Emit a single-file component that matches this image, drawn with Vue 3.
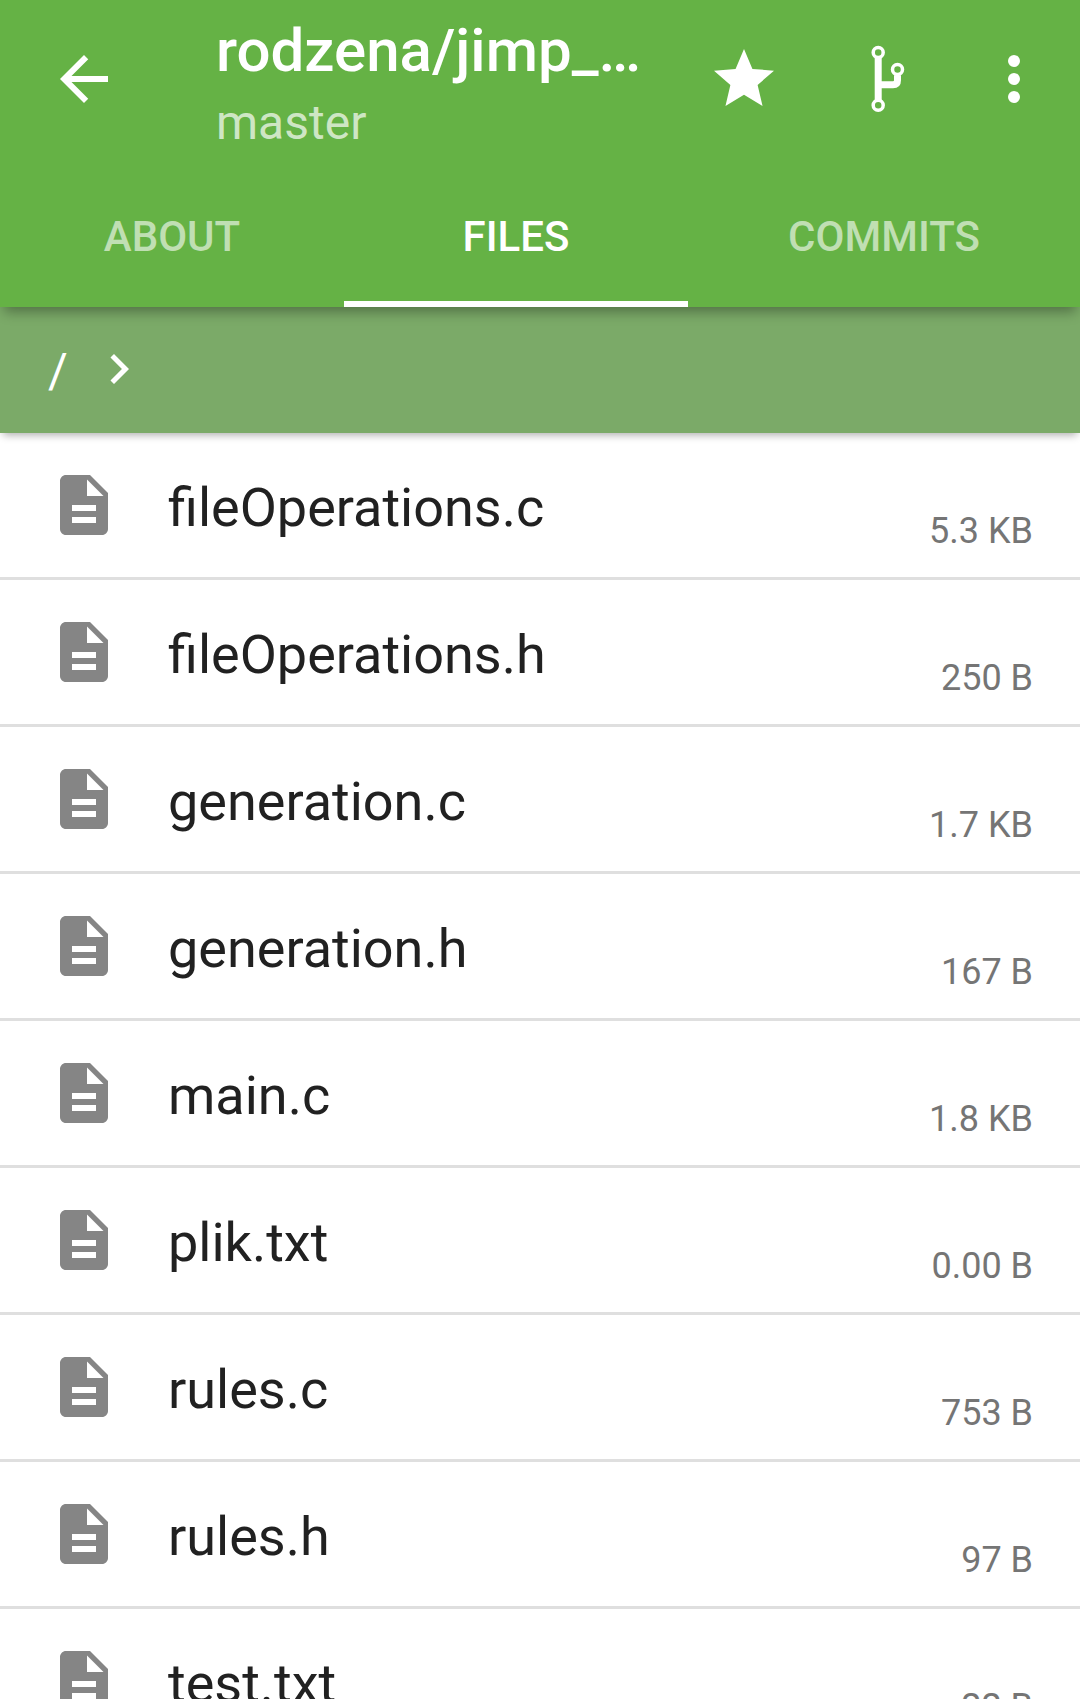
<script setup>
import { ref } from 'vue'

const tabs = ['About', 'Files', 'Commits']
const active = ref('Files')

const files = [
  { name: 'fileOperations.c', size: '5.3 KB' },
  { name: 'fileOperations.h', size: '250 B' },
  { name: 'generation.c', size: '1.7 KB' },
  { name: 'generation.h', size: '167 B' },
  { name: 'main.c', size: '1.8 KB' },
  { name: 'plik.txt', size: '0.00 B' },
  { name: 'rules.c', size: '753 B' },
  { name: 'rules.h', size: '97 B' },
  { name: 'test.txt', size: '22 B' },
]
</script>

<template>
  <div class="screen">
    <header class="app-bar">
      <div class="toolbar">
        <svg class="icon back" viewBox="0 0 24 24"><path d="M20 11H7.83l5.59-5.59L12 4l-8 8 8 8 1.41-1.41L7.83 13H20v-2z" /></svg>
        <div class="titles">
          <h1>rodzena/jimp_…</h1>
          <p>master</p>
        </div>
        <div class="actions">
          <svg class="icon" viewBox="0 0 24 24"><path d="M12 17.27L18.18 21l-1.64-7.03L22 9.24l-7.19-.61L12 2 9.19 8.63 2 9.24l5.46 4.73L5.82 21z" /></svg>
          <svg class="icon fork" viewBox="0 0 72 72">
            <path d="M26.2 15v42M26.2 41.7h14.8q4.5 0 4.5-4.5v-5" stroke-width="7" />
            <g stroke-width="3.5">
              <circle cx="26.2" cy="9.5" r="5" />
              <circle cx="26.2" cy="62.3" r="5" />
              <circle cx="45.5" cy="26.5" r="5" />
            </g>
          </svg>
          <svg class="icon" viewBox="0 0 24 24">
            <circle cx="12" cy="6" r="2" /><circle cx="12" cy="12" r="2" /><circle cx="12" cy="18" r="2" />
          </svg>
        </div>
      </div>
      <nav class="tabs">
        <button v-for="tab in tabs" :key="tab" class="tab" :class="{ active: tab === active }" @click="active = tab">
          {{ tab }}
        </button>
      </nav>
    </header>

    <div class="path-bar">
      <span>/</span>
      <svg viewBox="0 0 24 24"><path d="M10 6L8.59 7.41 13.17 12l-4.58 4.59L10 18l6-6z" /></svg>
    </div>

    <ul class="files">
      <li v-for="file in files" :key="file.name">
        <svg class="icon" viewBox="0 0 24 24"><path d="M14 2H6c-1.1 0-2 .9-2 2v16c0 1.1.9 2 2 2h12c1.1 0 2-.9 2-2V8l-6-6zm2 16H8v-2h8v2zm0-4H8v-2h8v2zm-3-5V3.500L18.500 9H13z" /></svg>
        <span class="name">{{ file.name }}</span>
        <span class="size">{{ file.size }}</span>
      </li>
    </ul>
  </div>
</template>

<style>
body {
  margin: 0;
}
</style>

<style scoped>
.screen {
  width: 1080px;
  height: 1699px;
  overflow: hidden;
  background: #fff;
  font-family: Roboto, sans-serif;
}
.icon {
  display: block;
  flex: none;
  width: 72px;
  height: 72px;
  fill: currentColor;
}
.app-bar {
  position: relative;
  z-index: 2;
  height: 307px;
  background: #65b245;
  color: #fff;
  box-shadow: 0 9px 12px -4px rgba(0, 0, 0, 0.33);
}
.toolbar {
  display: flex;
  align-items: flex-start;
  height: 163px;
}
.back {
  margin: 43px 0 0 48px;
}
.titles {
  margin: 16px 0 0 96px;
  width: 480px;
}
h1 {
  margin: 0;
  font-size: 60px;
  font-weight: 500;
  line-height: 70px;
  white-space: nowrap;
}
p {
  margin: 9px 0 0;
  font-size: 48px;
  line-height: 56px;
  color: rgba(255, 255, 255, 0.7);
}
.actions {
  display: flex;
  gap: 72px;
  margin: 43px 0 0 12px;
}
.fork {
  margin-right: -18px;
  fill: none;
  stroke: currentColor;
}
.tabs {
  display: flex;
  height: 144px;
}
.tab {
  box-sizing: border-box;
  flex: 0 0 344px;
  padding: 9px 0 0;
  border: 0;
  border-bottom: 6px solid transparent;
  background: none;
  font: 500 42px/50px Roboto, sans-serif;
  text-transform: uppercase;
  color: rgba(255, 255, 255, 0.6);
}
.tab:last-child {
  flex-basis: 392px;
}
.tab.active {
  color: #fff;
  border-bottom-color: #fff;
}
.path-bar {
  position: relative;
  z-index: 1;
  display: flex;
  align-items: center;
  height: 126px;
  padding-left: 48px;
  background: #7baa68;
  color: #fff;
  font-size: 48px;
  line-height: 56px;
  box-shadow: 0 5px 8px -3px rgba(0, 0, 0, 0.33);
}
.path-bar span {
  padding-top: 2px;
}
.path-bar svg {
  width: 60px;
  height: 60px;
  margin: 0 0 3px 21px;
  fill: currentColor;
}
.files {
  margin: 0;
  padding: 0;
  list-style: none;
}
li {
  box-sizing: border-box;
  display: flex;
  align-items: flex-start;
  height: 147px;
  padding: 36px 47px 0 48px;
  border-bottom: 3px solid #dfdfdf;
}
li .icon {
  color: #858585;
}
.name {
  flex: 1;
  margin: 7px 0 0 48px;
  font-size: 54px;
  line-height: 64px;
  color: #212121;
}
.size {
  margin-top: 41px;
  font-size: 36px;
  line-height: 42px;
  color: #757575;
}
</style>
